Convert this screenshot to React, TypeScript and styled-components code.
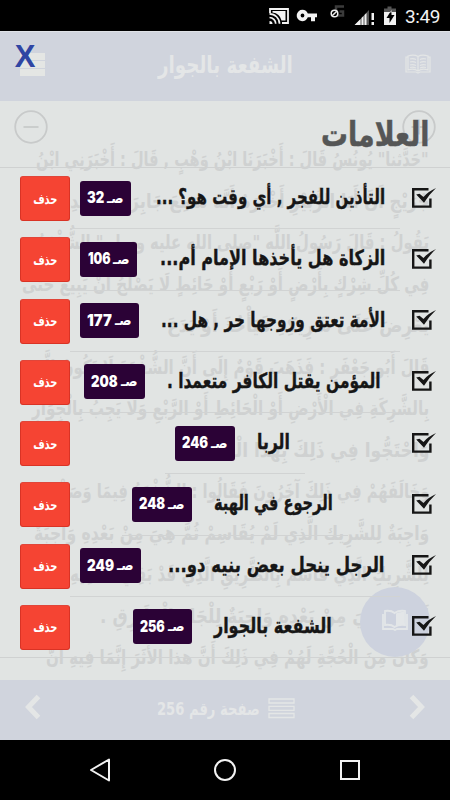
import React, { useLayoutEffect, useRef, useState } from "react";
import styled, { createGlobalStyle } from "styled-components";

const Global = createGlobalStyle`
  body { margin: 0; background: #000; }
  * { box-sizing: border-box; }
`;

const Screen = styled.div`
  position: relative;
  width: 450px;
  height: 800px;
  overflow: hidden;
  display: flex;
  flex-direction: column;
  background: #e1e4e3;
  font-family: "DejaVu Sans", "Liberation Sans", sans-serif;
`;

const StatusBar = styled.header`
  flex: none;
  height: 31px;
  background: #000;
  color: #f2f2f2;
  display: flex;
  justify-content: flex-end;
  padding-right: 10px;
`;

const Clock = styled.span`
  width: 35px;
  font: 400 19px/33px Roboto, sans-serif;
  letter-spacing: -0.4px;
`;

const AppBar = styled.div`
  flex: none;
  height: 70px;
  border-top: 1px solid #dfe2e6;
  background: #d0d4dd;
  color: #e4e6e7;
  display: flex;
  justify-content: space-between;
  align-items: flex-start;
  padding: 0 19px 0 20px;
`;

const BarTitle = styled.div`
  padding-top: 15px;
`;

const IconSlot = styled.div<{ $top: number }>`
  padding-top: ${(p) => p.$top}px;
  line-height: 0;
`;

const Reader = styled.main`
  flex: 1;
  min-height: 0;
  overflow: hidden;
  color: #cfd1d1;
`;

const ZoomControls = styled.div`
  height: 38px;
  display: flex;
  justify-content: space-between;
  padding: 9px 14px 0;
`;

const Paragraph = styled.div`
  direction: rtl;
  padding-right: 21px;
`;

const Footer = styled.div`
  flex: none;
  height: 60px;
  background: #d0d4dd;
  color: #e4e6e7;
  display: flex;
  align-items: flex-start;
  justify-content: space-between;
  padding: 0 25px;
`;

const PageLabel = styled.div`
  display: flex;
  gap: 8px;
  margin-left: 1px;
`;

const NavBar = styled.nav`
  flex: none;
  height: 60px;
  background: #000;
  display: flex;
  justify-content: center;
  line-height: 0;
`;

const FloatingBook = styled.div`
  position: absolute;
  left: 360px;
  top: 587px;
  width: 70px;
  height: 70px;
  border-radius: 50%;
  background: #cdd2de;
  display: flex;
  justify-content: center;
  align-items: center;
  padding-bottom: 5px;
`;

const Dialog = styled.section`
  position: absolute;
  inset: 31px 0 60px;
  direction: rtl;
`;

const DialogHead = styled.div`
  height: 137px;
  display: flex;
  justify-content: space-between;
  align-items: flex-start;
  padding: 0 21px 0 14px;
  border-bottom: 1px solid #cfd1d1;
`;

const Heading = styled.h1`
  margin: 0;
  padding-top: 80px;
  color: #555656;
  -webkit-text-stroke: 0.5px #555656;
`;

const Close = styled.button`
  border: 0;
  background: none;
  padding: 0;
  margin-top: 8px;
  width: 22px;
  color: #2f45a3;
  font: bold 31px/36px "Liberation Sans", Arial, sans-serif;
  direction: ltr;
`;

const List = styled.ul`
  margin: 0;
  padding: 0;
  list-style: none;
  height: 490px;
  border-bottom: 1px solid #cfd1d1;
`;

const Item = styled.li`
  height: 61.25px;
  display: flex;
  align-items: center;
  padding: 0 14px 0 20px;
  color: #161616;
`;

const Middle = styled.div`
  width: 330px;
  height: 100%;
  margin-right: 11px;
  display: flex;
  justify-content: center;
`;

const Label = styled.div<{ $full?: boolean }>`
  width: ${(p) => (p.$full ? "100%" : "auto")};
  display: flex;
  align-items: center;
  justify-content: space-between;
  gap: 22px;
  padding: 0 15px 0 10px;
  border-bottom: 1px solid #d1d3d3;
`;

const Title = styled.div`
  -webkit-text-stroke: 0.4px #161616;
  padding-bottom: 2px;
`;

const Badge = styled.span<{ $w: number }>`
  flex: none;
  width: ${(p) => p.$w}px;
  height: 35px;
  border-radius: 3px;
  background: #2b0236;
  color: #fff;
  display: flex;
  justify-content: space-between;
  align-items: center;
  padding: 0 7px;
`;

const Delete = styled.button`
  width: 50px;
  height: 45px;
  padding: 0;
  border: 1px solid #d93325;
  border-top-color: #e0463a;
  border-radius: 3px;
  background: #f54433;
  color: #fff;
  display: flex;
  justify-content: center;
  align-items: center;
`;

const FitBox = styled.span<{ $w: number; $size: number; $line: number; $weight: number; $font: string }>`
  display: block;
  flex: none;
  direction: rtl;
  width: ${(p) => p.$w}px;
  height: ${(p) => p.$line}px;
  font-family: ${(p) => p.$font}, "DejaVu Sans", sans-serif;
  font-size: ${(p) => p.$size}px;
  line-height: ${(p) => p.$line}px;
  font-weight: ${(p) => p.$weight};
  white-space: nowrap;
`;

const FitInner = styled.span`
  display: inline-block;
  transform-origin: right center;
  vertical-align: top;
`;

type FitProps = { text: string; w: number; size: number; line: number; weight?: number; font?: string };

/* Scales a line of text horizontally so that it fills the given width. */
function Fit({ text, w, size, line, weight = 700, font = '"DejaVu Sans"' }: FitProps) {
  const ref = useRef<HTMLSpanElement>(null);
  const [scale, setScale] = useState(1);
  useLayoutEffect(() => {
    if (ref.current) setScale(w / ref.current.offsetWidth);
  }, [text, w, size]);
  return (
    <FitBox $w={w} $size={size} $line={line} $weight={weight} $font={font}>
      <FitInner ref={ref} style={{ transform: `scaleX(${scale})` }}>{text}</FitInner>
    </FitBox>
  );
}

const lines: [string, number][] = [
  ["\"حَدَّثنا\" يُونُسُ قَالَ : أَخْبَرَنَا ابْنُ وَهْبٍ , قَالَ : أَخْبَرَنِي ابْنُ", 393],
  ["جُرَيْجٍ أَنَّ أَبَا الزُّبَيْرِ أَخْبَرَهُ أَنَّهُ سَمِعَ جَابِرَ بْنَ عَبْدِ اللهِ", 393],
  ["يَقُولُ : قَالَ رَسُولُ اللَّه \"صلى الله عليه وسلم\" الشُّفْعَةُ", 392],
  ["فِي كُلِّ شِرْكٍ بِأَرْضٍ أَوْ رَبْعٍ أَوْ حَائِطٍ لَا يَصْلُحُ أَنْ يَبِيعَ حَتَّى", 407],
  ["يَعْرِضَ عَلَى شَرِيكِهِ فَيَأْخُذَ أَوْ يَدَعَ", 262],
  ["قَالَ أَبُو جَعْفَرٍ : فَذَهَبَ قَوْمٌ إِلَى أَنَّ الشُّفْعَةَ لَا تَكُونُ إِلَّا", 390],
  ["بِالشَّرِكَةِ فِي الْأَرْضِ أَوْ الْحَائِطِ أَوْ الرَّبْعِ وَلَا يَجِبُ بِالْجِوَارِ", 397],
  ["وَاحْتَجُّوا فِي ذَلِكَ بِهَذَا الْحَدِيثِ", 240],
  ["وَخَالَفَهُمْ فِي ذَلِكَ آخَرُونَ فَقَالُوا : الشُّفْعَةُ فِيمَا وَصَفْتُمْ", 389],
  ["وَاجِبَةٌ لِلشَّرِيكِ الَّذِي لَمْ يُقَاسِمْ ثُمَّ هِيَ مِنْ بَعْدِهِ وَاجِبَةٌ", 395],
  ["لِلشَّرِيكِ الَّذِي قَاسَمَ بِالطَّرِيقِ الَّذِي قَدْ بَقِيَ لَهُ فِيهِ", 359],
  ["لَهُ ثُمَّ هِيَ مِنْ بَعْدِهِ وَاجِبَةٌ لِلْجَارِ الْمُلَازِقِ .", 329],
  ["وَكَانَ مِنَ الْحُجَّةِ لَهُمْ فِي ذَلِكَ أَنَّ هذا الأَثَرَ إِنَّمَا فِيهِ أَنَّ", 383],
];

const bookmarks = [
  { title: "التأذين للفجر , أي وقت هو؟ ...", w: 229, page: "32", bw: 51, full: true },
  { title: "الزكاة هل يأخذها الإمام أم...", w: 225, page: "106", bw: 57, full: true },
  { title: "الأمة تعتق وزوجها حر , هل ...", w: 224, page: "177", bw: 59, full: true },
  { title: "المؤمن يقتل الكافر متعمدا .", w: 214, page: "208", bw: 61 },
  { title: "الربا", w: 33, page: "246", bw: 60 },
  { title: "الرجوع في الهبة", w: 119, page: "248", bw: 60 },
  { title: "الرجل ينحل بعض بنيه دو...", w: 217, page: "249", bw: 61, full: true },
  { title: "الشفعة بالجوار", w: 118, page: "256", bw: 59 },
];

const StatusIcons = () => (
  <svg width="141" height="31" viewBox="265 0 141 31" fill="#f2f2f2">
    <path d="M271 13V9h18v14h-6" fill="none" stroke="#f2f2f2" strokeWidth="1.8" />
    <path d="M273.500 11h13v9.500h-4a10.500 10.500 0 0 0-9-8z" />
    <path d="M270.500 21a3 3 0 0 1 3 3h-3z" />
    <path d="M270.500 17.500a6.200 6.200 0 0 1 6.200 6.200M270.500 13.800a10 10 0 0 1 10 10" fill="none" stroke="#f2f2f2" strokeWidth="1.7" />
    <path fillRule="evenodd" d="M303.500 9.800a5.700 5.700 0 0 1 5.300 3.800H318v3.700h-2v4h-4v-4h-3.200a5.700 5.700 0 1 1-5.300-7.500zm0 3.800a1.900 1.900 0 1 0 0 3.800 1.900 1.900 0 0 0 0-3.800z" />
    <path d="M345 6.500h-8v9h7v-4h-3.500" fill="none" stroke="#3b3b3b" strokeWidth="2.500" />
    <circle cx="335.500" cy="13.500" r="3.300" fill="#000" stroke="#eee" strokeWidth="1.500" />
    <path d="M333.200 15.800l4.600-4.600" stroke="#eee" strokeWidth="1.500" />
    <path d="M370 10v15h-14z" fill="#555" />
    <path d="M355.500 25l6-6v6zM362.500 18l2-2v9h-2zM365.500 15l2-2v12h-2z" />
    <path d="M372.500 13h2.500v7h-2.500zM372.500 22h2.500v3h-2.500z" />
    <path d="M385 13V8.500h3.500v-2h4v2h4.500V13z" fill="#555" />
    <path fillRule="evenodd" d="M385 12h12v13h-12zM392.500 10l-5 8h3v5l5-8h-3z" />
  </svg>
);

const Menu = () => (
  <svg width="25" height="23" fill="#e4e6e4"><path d="M0 0h25v7H0zM0 8h25v7H0zM0 16h25v7H0z" /></svg>
);

const OpenBook = () => (
  <svg width="26" height="20" viewBox="0 0 26 20" fill="none" stroke="#e4e6e6" strokeWidth="1.200">
    <path d="M3 2Q9 0 13 2.500Q17 0 23 2V16Q17 14 13 17Q9 14 3 16ZM13 2.500V17M2.500 3H1v15h10l2 1 2-1h10V3h-1.500" />
    <path d="M5 5q3-1 6 .5M5 8q3-1 6 .5M5 11q3-1 6 .5M15 5.500q3-1.500 6-.5M15 8.500q3-1.500 6-.5M15 11.500q3-1.500 6-.5M5 13.500q3-1 6 .5M15 14q3-1.500 6-.5" />
  </svg>
);

const ZoomIcon = ({ plus }: { plus?: boolean }) => (
  <svg width="34" height="34" fill="none" stroke="#c8caca" strokeWidth="1.800">
    <circle cx="17" cy="17" r="15.800" />
    <path d={plus ? "M9.500 17h15M17 9.500v15" : "M9.500 17h15"} />
  </svg>
);

const Chevron = ({ right }: { right?: boolean }) => (
  <svg width="16" height="26" fill="none" stroke="#e4e6e6" strokeWidth="5">
    <path d={right ? "M2.500 2.500l10 10.500l-10 10.500" : "M13.500 2.500l-10 10.500l10 10.500"} />
  </svg>
);

const Check = () => (
  <svg width="25" height="22" viewBox="0 0 25 22">
    <path d="M17.500 1.200H2.200v17.400h17.200V10.500" fill="none" stroke="#161616" strokeWidth="2.400" />
    <path d="M5.200 6.500l3.300-.8 4 3.300Q17 3.500 25 0 18.500 6 13 14.800z" fill="#161616" />
  </svg>
);

export default function App() {
  return (
    <Screen>
      <Global />
      <StatusBar><StatusIcons /><Clock>3:49</Clock></StatusBar>
      <AppBar>
        <IconSlot $top={21}><Menu /></IconSlot>
        <BarTitle><Fit text="الشفعة بالجوار" w={135} size={24} line={36} /></BarTitle>
        <IconSlot $top={22}><OpenBook /></IconSlot>
      </AppBar>
      <Reader>
        <ZoomControls><ZoomIcon /><ZoomIcon plus /></ZoomControls>
        <Paragraph>
          {lines.map(([text, w]) => <Fit key={text} text={text} w={w} size={20} line={41.5} />)}
        </Paragraph>
      </Reader>
      <Footer>
        <IconSlot $top={14}><Chevron /></IconSlot>
        <PageLabel>
          <Fit text="صفحة رقم 256" w={103} size={18} line={58} />
          <IconSlot $top={18}>
            <svg width="27" height="21" fill="none" stroke="#e4e6e6" strokeWidth="1.300">
              <path d="M1 1h25v4H1zM1 8.300h25v4H1zM1 15.500h25v4H1z" />
            </svg>
          </IconSlot>
        </PageLabel>
        <IconSlot $top={14}><Chevron right /></IconSlot>
      </Footer>
      <NavBar>
        <svg width="450" height="60" fill="none" stroke="#f2f2f2" strokeWidth="2">
          <path d="M91 30l18-10.500v21z" strokeLinejoin="round" />
          <circle cx="225" cy="30" r="10" />
          <path d="M341 21h18v18h-18z" />
        </svg>
      </NavBar>
      <FloatingBook>
        <svg width="26" height="22" viewBox="0 0 26 22" fill="none" stroke="#e3e6e8" strokeWidth="1.800">
          <path d="M3 2q6-1 9.500 2Q17 1 23 2v14q-6-1-10.500 2Q9 15 3 16zM1 5v15h10l2 1 2-1h10V5" />
          <path d="M14 4.500Q17 2.500 22 3v12q-4 0-8 2z" fill="#e3e6e8" stroke="none" />
        </svg>
      </FloatingBook>
      <Dialog>
        <DialogHead>
          <Heading><Fit text="العلامات" w={108} size={34} line={46} /></Heading>
          <Close>X</Close>
        </DialogHead>
        <List>
          {bookmarks.map((b) => (
            <Item key={b.page}>
              <Check />
              <Middle>
                <Label $full={b.full}>
                  <Title><Fit text={b.title} w={b.w} size={21} line={34} /></Title>
                  <Badge $w={b.bw}>
                    <Fit text="صـ" w={17} size={15} line={31} />
                    <Fit text={b.page} w={b.bw - 34} size={15.5} line={34} weight={900} font="Inter" />
                  </Badge>
                </Label>
              </Middle>
              <Delete><Fit text="حذف" w={24} size={14} line={30} /></Delete>
            </Item>
          ))}
        </List>
      </Dialog>
    </Screen>
  );
}
